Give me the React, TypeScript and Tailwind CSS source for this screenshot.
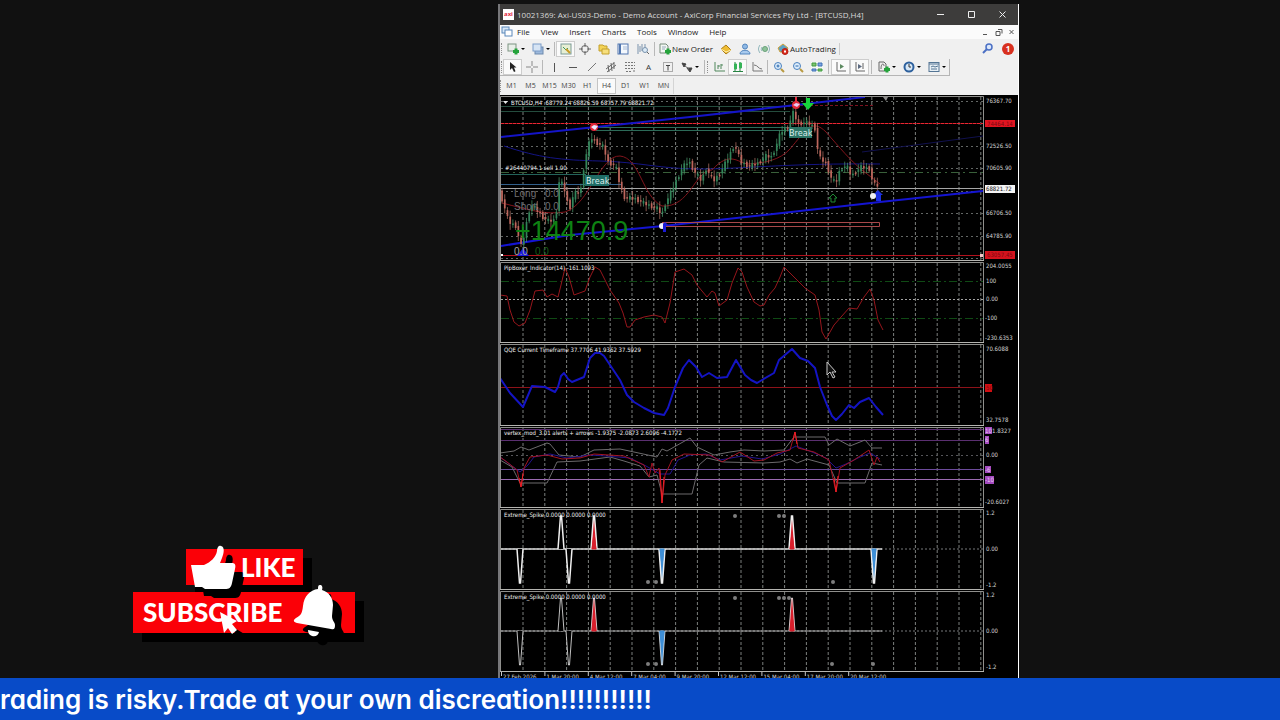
import React from 'react';
import clsx from 'clsx';

type Point = [number, number];

const GRID_START = 523;
const GRID_STEP = 21.8;
const PLOT_LEFT = 501;
const PLOT_RIGHT = 983;

const gridLines = Array.from({ length: 22 }, (_, i) => GRID_START + i * GRID_STEP);

const pricePath: Point[] = [
  [502, 196], [504, 201], [510, 222], [517, 226], [523, 248], [527, 227], [532, 204], [537, 209],
  [544, 217], [550, 221], [557, 220], [560, 182], [564, 184], [568, 197], [570, 212], [575, 194],
  [582, 191], [584, 174], [587, 157], [592, 137], [597, 142], [605, 147], [609, 162], [617, 166],
  [621, 184], [625, 197], [637, 199], [647, 204], [660, 209], [663, 217], [665, 207], [670, 197],
  [677, 182], [684, 167], [690, 161], [696, 172], [703, 181], [707, 168], [715, 181], [722, 172],
  [730, 157], [736, 144], [742, 162], [750, 166], [760, 163], [767, 156], [773, 157], [778, 144],
  [782, 132], [790, 127], [794, 112], [800, 124], [807, 122], [816, 127], [820, 157], [827, 163],
  [833, 179], [837, 183], [842, 168], [848, 166], [853, 176], [862, 167], [872, 169], [874, 184],
  [880, 186],
];

const rsiLine =
  '500,295 507,296 510,310 514,322 519,326 525,323 530,310 535,291 543,290 547,297 552,294 558,297 561,285 565,268 569,277 574,295 585,291 590,277 595,267 600,270 610,290 619,303 623,313 627,327 630,327 635,320 644,317 654,315 662,317 665,323 670,303 675,272 684,269 692,275 697,285 707,297 712,291 715,293 719,306 727,300 732,283 738,268 742,272 747,287 754,302 760,306 764,305 769,295 775,288 780,277 784,267 794,277 805,288 815,295 819,310 822,332 826,339 834,325 849,308 857,309 864,297 870,289 874,300 878,320 883,330';

const qqeLine =
  '500,378 510,393 523,407 532,386 545,387 555,392 558,387 561,376 564,373 568,379 572,382 584,377 590,358 595,353 600,353 604,356 610,365 620,380 627,395 634,402 644,408 654,413 664,415 668,408 675,387 683,368 689,360 696,367 702,377 709,373 717,378 727,377 736,360 745,375 751,380 757,383 762,380 774,373 779,360 792,349 800,358 808,361 815,368 820,387 827,405 832,416 836,420 842,414 849,405 854,408 860,402 869,398 876,407 883,415';

const bandUpper =
  '500,453 514,451 521,447 529,450 547,443 550,444 559,455 580,457 594,450 620,449 634,452 657,457 662,449 667,451 690,438 697,447 714,455 730,452 744,450 764,451 784,450 794,437 825,437 829,445 837,439 850,446 865,440 872,448 882,448';

const bandLower =
  '500,460 512,467 520,483 547,483 557,462 580,461 610,457 624,461 640,466 649,477 657,475 662,494 692,494 699,465 707,458 724,462 764,463 780,462 790,459 797,463 807,459 829,465 837,483 865,483 872,463 882,465';

const vertexRed =
  '500,457 507,462 517,470 521,487 524,468 530,457 547,455 562,459 580,458 594,454 624,456 644,465 649,477 652,463 655,473 659,468 662,503 665,475 672,460 684,454 710,455 722,462 740,452 754,461 764,460 777,453 790,450 795,432 798,448 814,452 829,460 836,492 840,468 854,460 869,450 874,465 877,457 880,462';

const vertexBlue =
  '500,457 512,466 520,472 528,465 534,457 550,454 567,458 590,455 606,456 630,458 646,466 660,474 670,474 678,460 690,455 706,454 720,460 742,456 762,459 780,454 796,446 812,452 826,458 836,468 846,464 858,458 870,453 880,459';

function priceAt(x: number) {
  for (let i = 1; i < pricePath.length; i++) {
    const [x0, y0] = pricePath[i - 1];
    const [x1, y1] = pricePath[i];
    if (x <= x1) return y0 + ((y1 - y0) * (x - x0)) / (x1 - x0);
  }
  return pricePath[pricePath.length - 1][1];
}

const candles = Array.from({ length: 139 }, (_, i) => {
  const x = 502 + i * 2.72;
  const jitter = ((i * 7) % 5) - 2;
  const open = priceAt(x - 1.4) + jitter;
  const close = priceAt(x + 1.4) - jitter;
  const wick = 2 + ((i * 13) % 5);
  return { x, open, close, high: Math.min(open, close) - wick, low: Math.max(open, close) + wick };
});

const GridLines = ({ top, bottom }: { top: number; bottom: number }) => (
  <g stroke="#7b7f7d" strokeDasharray="3 2" strokeWidth="1">
    {gridLines.map((x) => (
      <line key={x} x1={x} x2={x} y1={top} y2={bottom} />
    ))}
  </g>
);

const AxisText = ({ y, children, x = 986 }: { y: number; x?: number; children: string }) => (
  <text x={x} y={y + 2} fill="#d6d6d6" fontSize="6">
    {children}
  </text>
);

type PanelProps = {
  label: string;
  top: number;
  bottom: number;
  title: string;
  children: React.ReactNode;
};

// Every panel shares one horizontal scale, so the grids line up down the window.
const Panel = ({ label, top, bottom, title, children }: PanelProps) => (
  <svg
    role="img"
    aria-label={label}
    viewBox={`500 ${top} 518 ${bottom - top}`}
    className="block h-auto w-full bg-black font-['DejaVu_Sans_Condensed','Liberation_Sans',sans-serif]"
  >
    <GridLines top={top + 2} bottom={bottom - 1} />
    {children}
    <path d={`M500.5 ${bottom}V${top + 1.5}H983.5V${bottom}`} fill="none" stroke="#8f8f8c" />
    <rect x="500" y={bottom - 1} width="484" height="1" fill="#b4b4b0" />
    <text x="504" y={top + 9} fill="#f0f0f0" fontSize="6">
      {title}
    </text>
  </svg>
);

const PricePanel = () => (
  <Panel label="BTCUSD H4 price" top={95} bottom={261} title="">
    <g stroke="#626664" strokeDasharray="2 3">
      {[101, 123, 146, 168, 191, 213, 236, 258].map((y) => (
        <line key={y} x1={PLOT_LEFT} x2={PLOT_RIGHT} y1={y + 0.5} y2={y + 0.5} />
      ))}
    </g>
    <g fill="none">
      <path d="M501 106.5H790M501 111.5H790" stroke="#244c3d" />
      <path d="M596 127.5H790M596 130.5H790" stroke="#2c6a58" />
      <path d="M800 105.5H873" stroke="#7d1220" strokeDasharray="3 2" />
      <path d="M501 123.5H983" stroke="#7d1018" />
      <path d="M501 123.5H983" stroke="#ea2632" strokeDasharray="3 1" />
      <path d="M501 172.5H983" stroke="#39603a" strokeDasharray="8 4 2 4" />
      <path d="M501 174.5H586" stroke="#23645b" />
      <path d="M501 184.5H622" stroke="#315f8a" />
      <path d="M501 188.5H983" stroke="#a6a6a6" />
      <path d="M501 255.5H983" stroke="#b3111d" />
      <path d="M501 137L596 127L690 117L796 105L865 97" stroke="#1414c8" strokeWidth="2" />
      <path d="M501 246L570 235L663 226L800 211L880 202L983 191" stroke="#1414d2" strokeWidth="2" />
      <path d="M504 146C540 158 560 160 600 161S660 169 700 169S790 163 880 164" stroke="#141484" />
      <path d="M862 152L983 136" stroke="#10104e" />
      <path
        d="M502 203C530 210 545 215 565 212C590 204 600 155 620 156C640 158 642 196 662 206C690 208 695 170 712 170C730 150 738 163 748 164C765 163 780 160 790 149C806 130 812 118 826 132C840 148 850 160 862 170L880 184"
        stroke="#82141c"
      />
      <path d="M662 222.5H879.5V226.5H662" stroke="#a8484a" />
    </g>
    {candles.map(({ x, open, close, high, low }) => {
      const up = close < open;
      return (
        <g key={x}>
          <line x1={x} x2={x} y1={high} y2={low} stroke={up ? '#4d9c6e' : '#b87569'} strokeWidth="0.7" />
          <rect
            x={x - 0.8}
            y={Math.min(open, close)}
            width="1.7"
            height={Math.max(1.5, Math.abs(open - close))}
            fill={up ? '#328459' : '#bd665c'}
          />
        </g>
      );
    })}

    {/* trade markers */}
    <circle cx="594" cy="127" r="4" fill="#e3283a" />
    <path d="M591 127l3-2 4 1-3 4z" fill="#e9e9ff" />
    <circle cx="796" cy="105" r="4" fill="#e3283a" />
    <path d="M793 105l3-2 4 1-3 3z" fill="#e9c9ef" />
    <path d="M796 97v6" stroke="#e3283a" strokeWidth="2" />
    <path d="M806 98h4v5h4l-6 7-6-7h4z" fill="#16d33c" />
    <path d="M833 194l4 4h-2v4h-4v-4h-2z" fill="none" stroke="#1f8a34" />
    <path d="M883 97h5l-2 4z" fill="#8e8e8e" />
    <circle cx="662" cy="226" r="3" fill="#f2f2ff" />
    <path d="M665 222l4 4h-3v6h-3v-8z" fill="#1a1ad8" />
    <path d="M878 190l5 5h-2v6h-5v-6h-3z" fill="#1a2fe0" />
    <circle cx="873" cy="196" r="3" fill="#f2f2f2" />
    <path d="M523 248l6 8h-12z" fill="#1a1ae0" />
    <rect x="501" y="254" width="2" height="2" fill="#fff" />

    <rect x="585" y="175" width="24" height="11" fill="#1f6d66" />
    <text x="586" y="184" fontSize="9" fill="#dcecea">
      Break
    </text>
    <rect x="789" y="127" width="23" height="11" fill="#2b7566" />
    <text x="789" y="136" fontSize="9" fill="#dcecea">
      Break
    </text>

    <path d="M503 101h5l-2.500 3z" fill="#e6e6e6" />
    <text x="511" y="105" fontSize="6" fill="#f0f0f0">
      {'BTCUSD,H4\u00a0 68779.24 68826.59 68757.79 68821.72'}
    </text>
    <text x="505" y="170" fontSize="6" fill="#f0f0f0">
      #26440794.1 sell 1.00
    </text>
    <g fill="#6f6f73" fontSize="10" className="font-['Liberation_Sans',sans-serif]">
      <text x="514" y="197">Long</text>
      <text x="545" y="197">0.0</text>
      <text x="514" y="210">Short</text>
      <text x="545" y="210">0.0</text>
      <text x="514" y="255" fill="#a5a5a5">0.0</text>
      <text x="535" y="255" fill="#155c15">0.0</text>
    </g>
    <text x="515" y="240" fontSize="27" fill="#0e8213" className="font-['Liberation_Sans',sans-serif]">
      +14470.9
    </text>

    <AxisText y={101}>76367.70</AxisText>
    <rect x="985" y="120" width="30" height="7" fill="#e01420" />
    <text x="987" y="126" fontSize="6" fill="#7a0a10">74464.14</text>
    <AxisText y={146}>72526.50</AxisText>
    <AxisText y={168}>70605.90</AxisText>
    <rect x="985" y="185" width="30" height="8" fill="#f4f4f4" />
    <text x="986" y="191" fontSize="6" fill="#111">68821.72</text>
    <AxisText y={213}>66706.50</AxisText>
    <AxisText y={236}>64785.90</AxisText>
    <rect x="985" y="251" width="30" height="8" fill="#d4121d" />
    <text x="987" y="257" fontSize="6" fill="#7a0a10">63057.45</text>
    <rect x="980" y="254" width="3" height="3" fill="#f3c6c8" />
  </Panel>
);

const PipBoxerPanel = () => (
  <Panel label="PipBoxer indicator" top={261} bottom={343} title="PipBoxer_Indicator(14) -161.1093">
    <path d="M501 281.500H983M501 318.500H983" stroke="#0f4a14" strokeDasharray="8 3 2 3" />
    <path d="M501 299.500H983" stroke="#a5a5a5" strokeDasharray="2 2" />
    <polyline points={rsiLine} fill="none" stroke="#96161c" strokeWidth="1" />
    <AxisText y={266}>204.0055</AxisText>
    <AxisText y={281}>100</AxisText>
    <AxisText y={299}>0.00</AxisText>
    <AxisText y={318} x={985}>-100</AxisText>
    <AxisText y={338} x={985}>-230.6353</AxisText>
  </Panel>
);

const QqePanel = () => (
  <Panel label="QQE indicator" top={343} bottom={426} title="QQE Current Timeframe 37.7706 41.9362 37.5929">
    <path d="M501 387.500H983" stroke="#8d1219" />
    <polyline points={qqeLine} fill="none" stroke="#1414c4" strokeWidth="2" strokeLinejoin="round" />
    <AxisText y={349}>70.6088</AxisText>
    <rect x="985" y="384" width="7" height="8" fill="#d10e12" />
    <text x="986" y="390" fontSize="6" fill="#7a0a10">50</text>
    <AxisText y={420}>32.7578</AxisText>
    <path d="M827 362v13l3-3 3 6 2-1-3-5h4z" fill="#111" stroke="#c8c8c8" />
  </Panel>
);

const VertexPanel = () => (
  <Panel
    label="Vertex indicator"
    top={426}
    bottom={508}
    title="vertex_mod_3.01 alerts + arrows -1.9375 -2.0873 2.6096 -4.1772"
  >
    <path d="M501 429.500H983M501 440.500H983" stroke="#5a2f70" />
    <path d="M501 455.500H983" stroke="#55555a" strokeDasharray="2 3" />
    <path d="M501 469.500H983" stroke="#6b4a9a" />
    <path d="M501 479.500H983" stroke="#9a6ab0" />
    <g fill="none" strokeWidth="1">
      <polyline points={bandUpper} stroke="#6c6a6c" />
      <polyline points={bandLower} stroke="#6c6a6c" />
      <polyline points={vertexBlue} stroke="#23128e" />
      <polyline points={vertexRed} stroke="#a31322" />
      <path d="M660 470L662 503L664 477M519 478L521 487L523 474M834 478L836 492L838 476M793 440L795 432L797 444" stroke="#ee1f25" />
    </g>
    <AxisText y={431} x={992}>1.8327</AxisText>
    <g fill="#a44bc0">
      <rect x="985" y="427" width="7" height="7" />
      <rect x="985" y="436" width="4" height="8" />
      <rect x="985" y="466" width="6" height="7" />
      <rect x="985" y="476" width="9" height="8" />
    </g>
    <g fill="#e9cdf0" fontSize="6">
      <text x="985" y="433">10</text>
      <text x="985" y="442">6</text>
      <text x="985" y="472">-6</text>
      <text x="985" y="482">-10</text>
    </g>
    <AxisText y={455}>0.00</AxisText>
    <AxisText y={502} x={985}>-20.6027</AxisText>
  </Panel>
);

type Spike = { x: number; dir: 'up' | 'down'; kind: 'plain' | 'sell' | 'buy' };

type SpikePanelProps = {
  label: string;
  top: number;
  bottom: number;
  thickness: number;
  spikes: Spike[];
  upperDots: number[];
  lowerDots: number[];
};

const fills = { plain: '#000', sell: '#d81f2c', buy: '#3f8fd6' };

const SpikePanel = ({ label, top, bottom, thickness, spikes, upperDots, lowerDots }: SpikePanelProps) => {
  const base = top + 41;
  return (
    <Panel label={label} top={top} bottom={bottom} title="Extreme_Spike 0.0000 0.0000 0.0000">
      <path d={`M501 ${base}H983`} stroke="#77797a" strokeDasharray="2 2" />
      <path d={`M501 ${base}H882`} stroke="#dcdcdc" strokeWidth={thickness} />
      {spikes.map(({ x, dir, kind }) => {
        const tip = dir === 'up' ? base - 33 : base + 34;
        return (
          <g key={x}>
            <path
              d={`M${x - 3} ${base}L${x - 0.5} ${tip}h1L${x + 3} ${base}`}
              fill={fills[kind]}
              stroke="#f0f0f0"
              strokeWidth={thickness}
            />
            {kind !== 'plain' && (
              <path d={`M${x - 2} ${base}L${x} ${(base + tip) / 2}L${x + 2} ${base}z`} fill={fills[kind]} stroke={fills[kind]} />
            )}
          </g>
        );
      })}
      <g fill="#7d7d7d">
        {upperDots.map((x) => (
          <circle key={x} cx={x} cy={top + 8} r="2" />
        ))}
        {lowerDots.map((x) => (
          <circle key={x} cx={x} cy={top + 74} r="2" />
        ))}
      </g>
      <AxisText y={top + 5}>1.2</AxisText>
      <AxisText y={base}>0.00</AxisText>
      <AxisText y={top + 77}>-1.2</AxisText>
    </Panel>
  );
};

const spikes: Spike[] = [
  { x: 520, dir: 'down', kind: 'plain' },
  { x: 561, dir: 'up', kind: 'plain' },
  { x: 569, dir: 'down', kind: 'plain' },
  { x: 594, dir: 'up', kind: 'sell' },
  { x: 662, dir: 'down', kind: 'buy' },
  { x: 792, dir: 'up', kind: 'sell' },
];

const dates = [
  '27 Feb 2026', '1 Mar 20:00', '4 Mar 12:00', '7 Mar 04:00', '9 Mar 20:00',
  '12 Mar 12:00', '15 Mar 04:00', '17 Mar 20:00', '20 Mar 12:00',
];

const TimeAxis = () => (
  <svg
    role="img"
    aria-label="Time axis"
    viewBox="500 672 518 14"
    className="block h-auto w-full bg-black font-['DejaVu_Sans_Condensed','Liberation_Sans',sans-serif]"
  >
    {dates.map((date, i) => (
      <g key={date}>
        <rect x={501 + i * 43.4} y="672" width="1" height="4" fill="#c9c9c9" />
        <text x={503 + i * 43.4} y="679" fontSize="6" fill="#d6d6d6">
          {date}
        </text>
      </g>
    ))}
  </svg>
);

const Icon = ({ children }: { children: React.ReactNode }) => (
  <svg viewBox="0 0 12 12" className="size-3 shrink-0" fill="none" stroke="#666" aria-hidden="true">
    {children}
  </svg>
);

const plus = <path d="M6 8.500h6M9 5.500v6" stroke="#25a33b" strokeWidth="3" />;

const icons = {
  newChart: <><rect x="1" y="1" width="8" height="7" fill="#e8efe8" stroke="#7c9482" />{plus}</>,
  profiles: <><rect x="3" y="4" width="8" height="7" fill="#9db9dc" stroke="#6d89ad" /><rect x="1" y="1" width="8" height="7" fill="#d6e4f4" stroke="#7a9cc8" /></>,
  market: <><rect x="1" y="1" width="10" height="10" fill="#e7efd4" stroke="#7b9a95" /><path d="M3 4l3 3 2-2" stroke="#3c9960" /><path d="M6 6l4 4" stroke="#c99b24" strokeWidth="2" /></>,
  target: <><circle cx="6" cy="6" r="3.500" /><path d="M6 0v4M6 8v4M0 6h4M8 6h4" /></>,
  navigator: <><path d="M1 2h4l1 1h3v5H1z" fill="#f3d356" stroke="#c3a02d" /><path d="M4 6h7v5H4z" fill="#f7df7c" stroke="#c3a02d" /></>,
  terminal: <><rect x="1" y="1" width="10" height="10" fill="#f4f8fd" stroke="#5277b0" /><path d="M3 1v10" stroke="#5277b0" strokeWidth="2" /><path d="M6 4h4M6 6h4" stroke="#a9bcd6" /></>,
  tester: <><path d="M1 1v10M3 3v6M5 1v7M8 1v4" stroke="#7a93ad" /><circle cx="8" cy="7" r="2.500" fill="#dcebf7" stroke="#7a93ad" /><path d="M10 9l2 2" /></>,
  order: <><path d="M1 1h6l2 2v7H1z" fill="#f3f7f3" stroke="#778b7a" /><path d="M3 4h4M3 6h3" stroke="#9ab" />{plus}</>,
  metaEditor: <><path d="M1 6l5-4 5 5-5 4z" fill="#efbd33" stroke="#ad7d18" /><path d="M1 6l5 3 5-2" stroke="#fff1b0" /></>,
  account: <><circle cx="6" cy="3.500" r="2.500" fill="#8fb8e4" stroke="#5386bf" /><path d="M1 11c0-5 10-5 10 0z" fill="#a8caee" stroke="#5386bf" /></>,
  signals: <><path d="M2 2c-2 3-2 5 0 8M10 2c2 3 2 5 0 8M4 4c-1 2-1 3 0 4" stroke="#8fb5ba" /><circle cx="7" cy="6" r="2.500" fill="#8ec29a" stroke="#6ba37b" /></>,
  auto: <><path d="M1 5l5-4 5 4-2 4H3z" fill="#5ca2c4" stroke="#d0a23a" /><circle cx="8" cy="8.500" r="3" fill="#d92b1c" stroke="#b52014" /><rect x="7" y="7.500" width="2" height="2" fill="#fff" stroke="none" /></>,
  search: <><circle cx="7" cy="4" r="3" fill="#dce8fb" stroke="#4b70c4" strokeWidth="1.500" /><path d="M5 6L1 10" stroke="#4b70c4" strokeWidth="2" /></>,
  cursor: <path d="M3 1v8l2-2 2 4 1.500-.7L7 6.500h2.500z" fill="#222" stroke="none" />,
  cross: <path d="M6 0v5M6 7v5M0 6h5M7 6h5" stroke="#888" />,
  vline: <path d="M6.500 2v9" stroke="#555" />,
  hline: <path d="M2 6.500h8" stroke="#555" />,
  trend: <path d="M2 10l8-8" stroke="#777" />,
  channel: <path d="M1 8l8-6M2 11l9-7M3 4l1 7M6 2l1 8M9 1v7" stroke="#666" />,
  fib: <path d="M1 1.500h10M1 4.500h10M1 7.500h10M2 10.500h6M10 9v3" stroke="#777" strokeDasharray="2 1" />,
  label: <><rect x="1.500" y="1.500" width="9" height="9" strokeDasharray="1 1" /><path d="M4 4.500h4M6 4.500v5" stroke="#444" /></>,
  arrows: <><path d="M1 2l4 1-2 3zM6 7h5l-2 4z" fill="#444" stroke="#444" /><path d="M4 5l4 3" /></>,
  bars: <path d="M2 1v9h10M5 4v4M8 3v5M5 5h2M8 4h2" stroke="#51885c" />,
  candles: <><path d="M1 10.500h10M3 1v9M8 1v9" stroke="#278343" /><path d="M2.500 3h2v5h-2zM7.500 2h2v5h-2z" fill="#35b357" stroke="#35b357" /></>,
  lineChart: <path d="M2 1v9h10M3 4c4 0 4 4 8 4" stroke="#777" />,
  zoomIn: <><circle cx="5" cy="5" r="3.500" fill="#dcecfb" stroke="#4a80bd" /><path d="M3.500 5h3M5 3.500v3" stroke="#2868ae" /><path d="M8 8l3 3" stroke="#b99a42" strokeWidth="2" /></>,
  zoomOut: <><circle cx="5" cy="5" r="3.500" fill="#dcecfb" stroke="#4a80bd" /><path d="M3.500 5h3" stroke="#2868ae" /><path d="M8 8l3 3" stroke="#b99a42" strokeWidth="2" /></>,
  tile: <><path d="M0 1h12v10H0z" fill="#f4f8f4" stroke="none" /><path d="M1 2h4v3H1zM7 8h4v2H7z" fill="#7fc36d" stroke="#3f9a40" /><path d="M7 2h4v3H7zM1 8h4v2H1z" fill="#7ca5e3" stroke="#3f6fb4" /></>,
  scroll: <><path d="M2 1v9h9" /><path d="M5 3l4 2.500L5 8z" fill="#5c8a60" stroke="none" /></>,
  shift: <><path d="M2 1v9h9M9 2v6" /><path d="M4 3l4 2.500L4 8z" fill="#5c6a80" stroke="none" /></>,
  indicators: <><path d="M1 1h5l2 2v7H1z" fill="#eee" /><path d="M3 8c0-6 3-6 3-3" />{plus}</>,
  clock: <><circle cx="6" cy="6" r="4.500" fill="#d7e7f6" stroke="#2d609d" strokeWidth="2" /><path d="M6 3v3h2" stroke="#333" /></>,
  template: <><rect x="1" y="1.500" width="10" height="9" fill="#e8f0f5" stroke="#547594" /><path d="M1 3h10M3 6l2-1 2 1 3-1M3 8h6" stroke="#547594" /></>,
};

type IconName = keyof typeof icons;

type ToolProps = { icon: IconName; label: string; active?: boolean; menu?: boolean; wide?: boolean };

const Tool = ({ icon, label, active, menu, wide }: ToolProps) => (
  <button
    type="button"
    aria-label={label}
    className={clsx(
      'flex h-4 shrink-0 items-center justify-center',
      menu ? 'w-[25px] gap-[2px]' : wide ? 'w-5' : 'w-[19px]',
      active && 'border border-[#cdcdcd] bg-[#fafafa]',
    )}
  >
    <Icon>{icons[icon]}</Icon>
    {menu && <span className="h-0 w-0 border-x-2 border-t-2 border-x-transparent border-t-black" />}
  </button>
);

const Separator = ({ tight }: { tight?: boolean }) => (
  <span className={clsx('h-3.5 w-px shrink-0 bg-[#b8b8b8]', tight ? 'mx-px' : 'mx-[2px]')} />
);
const Grip = () => <span className="mr-px h-3 w-px shrink-0 border-l border-dotted border-[#8f8f8f]" />;

const TitleBar = () => (
  <header className="flex h-[21px] items-center bg-[#3d3c3b] pl-[3px] text-[#d8d8d8]">
    <span className="flex h-[11px] w-[11px] items-center justify-center bg-white text-[6px] font-bold text-[#e02440]">
      axi
    </span>
    <h1 className="ml-[3px] flex-1 truncate text-[8px] leading-4">
      10021369: Axi-US03-Demo - Demo Account - AxiCorp Financial Services Pty Ltd - [BTCUSD,H4]
    </h1>
    <div className="flex shrink-0">
      {[
        { name: 'Minimize', path: 'M1 4.500h7' },
        { name: 'Maximize', path: 'M1.500 1.500h6v6h-6z' },
        { name: 'Close', path: 'M1.500 1.500l6 6M7.500 1.500l-6 6' },
      ].map(({ name, path }) => (
        <button key={name} type="button" aria-label={name} className="flex h-5 w-[31px] items-center justify-center">
          <svg viewBox="0 0 9 9" className="size-[9px]" fill="none" stroke="#eee">
            <path d={path} />
          </svg>
        </button>
      ))}
    </div>
  </header>
);

const MenuBar = () => (
  <nav className="flex h-3.5 items-center bg-[#fbfbfb] pl-px text-[8px] text-[#222]">
    <Icon>
      <rect x="1" y="1" width="7" height="6" fill="#d7e7f7" stroke="#5b88ba" />
      <rect x="4" y="4" width="7" height="6" fill="#fff" stroke="#5b88ba" />
    </Icon>
    <div className="ml-1 flex flex-1 gap-[11px]">
      {['File', 'View', 'Insert', 'Charts', 'Tools', 'Window', 'Help'].map((item) => (
        <button key={item} type="button">
          {item}
        </button>
      ))}
    </div>
    <div className="flex gap-[5px] pr-[2px]">
      {['M1 6.500h4', 'M1 3.500h4v4h-4zM3 1.500h4v4', 'M1.500 2l4 4M5.500 2l-4 4'].map((path, i) => (
        <button key={path} type="button" aria-label={['Minimize chart', 'Restore chart', 'Close chart'][i]}>
          <svg viewBox="0 0 8 8" className="size-2" fill="none" stroke="#555">
            <path d={path} />
          </svg>
        </button>
      ))}
    </div>
  </nav>
);

const StandardBar = () => (
  <div className="flex h-[19px] items-center pl-px text-[8px] text-[#222]">
    <Grip />
    <Tool icon="newChart" label="New chart" menu />
    <Tool icon="profiles" label="Profiles" menu />
    <Separator tight />
    <Tool icon="market" label="Market Watch" active />
    <Tool icon="target" label="Data Window" />
    <Tool icon="navigator" label="Navigator" />
    <Tool icon="terminal" label="Terminal" wide />
    <Tool icon="tester" label="Strategy Tester" />
    <Separator />
    <button type="button" className="flex w-[59px] shrink-0 items-center gap-px whitespace-nowrap pl-[2px]">
      <Icon>{icons.order}</Icon>
      New Order
    </button>
    <Tool icon="metaEditor" label="MetaEditor" />
    <Tool icon="account" label="Account" />
    <Tool icon="signals" label="Signals" />
    <button type="button" className="ml-1 flex w-[63px] shrink-0 items-center gap-px whitespace-nowrap border-r border-[#ccc]">
      <Icon>{icons.auto}</Icon>
      AutoTrading
    </button>
    <div className="ml-auto flex items-center gap-2 pr-1">
      <button type="button" aria-label="Search">
        <Icon>{icons.search}</Icon>
      </button>
      <button
        type="button"
        aria-label="Alerts"
        className="flex size-3 items-center justify-center rounded-full bg-[#d8301f] text-[8px] font-bold leading-3 text-white"
      >
        1
      </button>
    </div>
  </div>
);

const DrawingBar = () => (
  <div className="flex h-[19px] items-center">
    <div className="flex h-[17px] items-center border-b border-r border-[#b5b5b5] pl-px">
      <Grip />
      <Tool icon="cursor" label="Cursor" active />
      <Tool icon="cross" label="Crosshair" />
      <Separator tight />
      <Tool icon="vline" label="Vertical line" />
      <Tool icon="hline" label="Horizontal line" />
      <Tool icon="trend" label="Trendline" />
      <Tool icon="channel" label="Channel" />
      <Tool icon="fib" label="Fibonacci" />
      <button type="button" className="h-4 w-[19px] shrink-0 text-[8px] text-[#333]">
        A
      </button>
      <Tool icon="label" label="Text label" />
      <Tool icon="arrows" label="Arrows" menu />
      <Separator />
      <Grip />
      <Tool icon="bars" label="Bar chart" />
      <Tool icon="candles" label="Candlesticks" active />
      <Tool icon="lineChart" label="Line chart" />
      <Separator tight />
      <Tool icon="zoomIn" label="Zoom in" />
      <Tool icon="zoomOut" label="Zoom out" />
      <Tool icon="tile" label="Tile windows" />
      <Separator />
      <Tool icon="scroll" label="Auto scroll" active />
      <Tool icon="shift" label="Chart shift" active />
      <Separator />
      <Tool icon="indicators" label="Indicators" menu />
      <Tool icon="clock" label="Periods" menu />
      <Tool icon="template" label="Templates" menu />
    </div>
  </div>
);

const TimeframeBar = () => (
  <div className="flex h-[18px] items-center text-[7px] text-[#444]">
    <Grip />
    {['M1', 'M5', 'M15', 'M30', 'H1', 'H4', 'D1', 'W1', 'MN'].map((frame) => (
      <button
        key={frame}
        type="button"
        className={clsx('h-4 w-[19px] shrink-0', frame === 'H4' && 'border border-[#c4c4c4] bg-[#fafafa]')}
      >
        {frame}
      </button>
    ))}
    <span className="h-4 w-px bg-[#d4d4d4]" />
  </div>
);

const TradingWindow = () => (
  <main className="mt-1 self-start border-l-2 border-r border-l-[#77777a] border-r-white bg-[#f0f0f0] font-['Open_Sans','Liberation_Sans',sans-serif]">
    <TitleBar />
    <MenuBar />
    <StandardBar />
    <DrawingBar />
    <TimeframeBar />
    <PricePanel />
    <PipBoxerPanel />
    <QqePanel />
    <VertexPanel />
    <SpikePanel
      label="Extreme Spike, fast"
      top={508}
      bottom={590}
      thickness={1.5}
      spikes={[...spikes, { x: 874, dir: 'down', kind: 'buy' }]}
      upperDots={[735, 779, 784]}
      lowerDots={[648, 656, 833]}
    />
    <SpikePanel
      label="Extreme Spike, slow"
      top={590}
      bottom={672}
      thickness={0.8}
      spikes={spikes}
      upperDots={[735, 779, 784, 789]}
      lowerDots={[648, 656, 832, 873]}
    />
    <TimeAxis />
  </main>
);

const thumb =
  'M1 20h13c7-3 12-8 13-14 0-4 2-6 4-5 4 1 3 7 1 12l-2 5h12c3 0 4 2 3 6l-3 14c-1 5-3 6-7 6H15l-3-2H5z';
const bell =
  'M27 0c2 0 3 2 2 5 7 2 11 8 11 15l-1 11c0 5 3 6 3 9 0 4-1 5-4 4L4 38c-4-1-4-3-1-5 5-3 6-4 7-12 1-10 7-16 15-17 0-2 0-4 2-4zM15 45l11 2c-1 4-4 5-7 4s-4-3-4-6z';

const SocialOverlay = () => (
  <aside className="flex flex-col items-center justify-end gap-[7px] pb-[45px] pr-[10px] font-['Lato',sans-serif] text-[26px] font-black text-white">
    <button type="button" className="relative flex h-9 w-[117px] items-center justify-end bg-[#fb0007] pr-[7px] shadow-[9px_9px_0_#000]">
      <svg viewBox="0 0 58 56" className="absolute -top-1 left-1 z-10 h-14 w-[58px]" aria-hidden="true">
        <path d={thumb} transform="translate(9 9)" fill="#000" />
        <path d={thumb} fill="#fff" />
      </svg>
      <span className="relative z-20">LIKE</span>
    </button>
    <button type="button" className="relative flex h-[41px] w-[222px] items-center bg-[#fb0007] pl-[10px] shadow-[9px_9px_0_#000]">
      SUBSCRIBE
      <svg viewBox="0 0 54 64" className="absolute -top-[7px] left-40 h-16 w-[54px]" aria-hidden="true">
        <path d={bell} transform="translate(9 9)" fill="#000" />
        <path d={bell} fill="#fff" />
      </svg>
      <svg viewBox="0 0 30 30" className="absolute left-[87px] top-5 size-[30px]" aria-hidden="true">
        <path d="M13 15l13 8 0 6H17z" fill="#000" />
        <path d="M0 0l17 9-5 3 5 6-5 4-4-6-4 5z" fill="#fff" />
      </svg>
    </button>
  </aside>
);

export default function App() {
  return (
    <div className="flex h-screen flex-col overflow-hidden bg-[#111111]">
      <div className="grid min-h-0 flex-1 grid-cols-[498fr_521fr_261fr] grid-rows-[minmax(0,1fr)] overflow-hidden">
        <SocialOverlay />
        <TradingWindow />
      </div>
      <footer className="flex h-[42px] shrink-0 items-center overflow-hidden whitespace-nowrap bg-[#084bc8] font-['Inter','Lato',sans-serif] text-[26px] font-semibold text-white [font-feature-settings:'cv11']">
        <p>rading is risky.Trade at your own discreation!!!!!!!!!!!</p>
      </footer>
    </div>
  );
}
